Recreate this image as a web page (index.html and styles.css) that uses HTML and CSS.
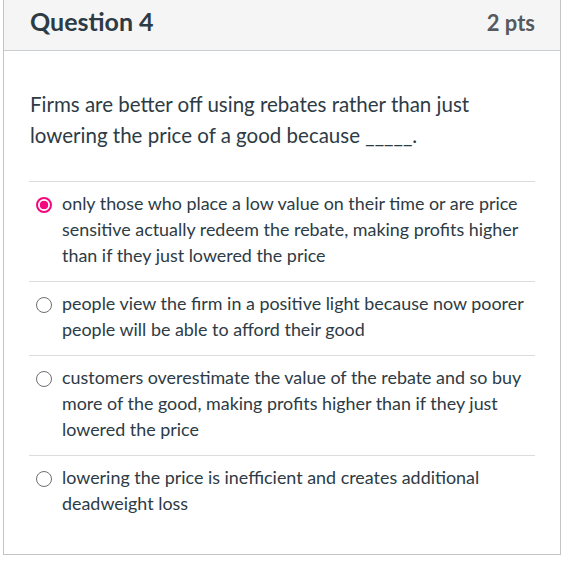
FILE: index.html
```html
<!DOCTYPE html>
<html lang="en">
<head>
<meta charset="utf-8">
<title>Question 4</title>
<link rel="stylesheet" href="styles.css">
</head>
<body>
<div class="question">
  <div class="header">
    <h2 class="title">Question 4</h2>
    <span class="points">2 pts</span>
  </div>
  <div class="content">
    <p class="prompt">Firms are better off using rebates rather than just lowering the price of a good because _____.</p>
    <div class="answers">
      <label class="answer">
        <span class="radio selected"></span>
        <span class="answer-text">only those who place a low value on their time or are price sensitive actually redeem the rebate, making profits higher than if they just lowered the price</span>
      </label>
      <label class="answer">
        <span class="radio"></span>
        <span class="answer-text">people view the firm in a positive light because now poorer people will be able to afford their good</span>
      </label>
      <label class="answer">
        <span class="radio"></span>
        <span class="answer-text">customers overestimate the value of the rebate and so buy more of the good, making profits higher than if they just lowered the price</span>
      </label>
      <label class="answer">
        <span class="radio"></span>
        <span class="answer-text">lowering the price is inefficient and creates additional deadweight loss</span>
      </label>
    </div>
  </div>
</div>
</body>
</html>
```
FILE: styles.css
```css
html, body {
  margin: 0;
  padding: 0;
  background: #ffffff;
}

body {
  font-family: Lato, "Noto Sans", sans-serif;
  color: #2d3b45;
}

.question {
  margin-left: 3px;
  width: 558px;
  box-sizing: border-box;
  border: 1px solid #c4c4c4;
  border-top: 0;
}

.header {
  display: flex;
  justify-content: space-between;
  align-items: baseline;
  height: 50px;
  padding: 0 25px 0 26px;
  background: #f5f5f5;
  border-bottom: 1px solid #c7cdd1;
}

.title {
  margin: 0;
  font-size: 25px;
  font-weight: 700;
  line-height: 42px;
}

.points {
  font-size: 22px;
  font-weight: 700;
  color: #555a5e;
  line-height: 42px;
}

.content {
  padding: 38px 25px 25px 25px;
}

.prompt {
  margin: 0 0 30px 1px;
  font-size: 20.5px;
  line-height: 31px;
}

.answer {
  display: flex;
  align-items: flex-start;
  gap: 10px;
  padding: 8px 0 13px 7px;
  border-top: 1px solid #dcdcdc;
  font-size: 17.9px;
  line-height: 26px;
}

.radio {
  flex: none;
  box-sizing: border-box;
  width: 16px;
  height: 16px;
  margin-top: 7px;
  border: 1px solid #707070;
  border-radius: 50%;
  background: #fff;
}

.radio.selected {
  border: 2px solid #f5077e;
  background: radial-gradient(circle, #f5077e 0 4px, #fff 4.6px);
}

.answer-text {
  display: block;
}
```
